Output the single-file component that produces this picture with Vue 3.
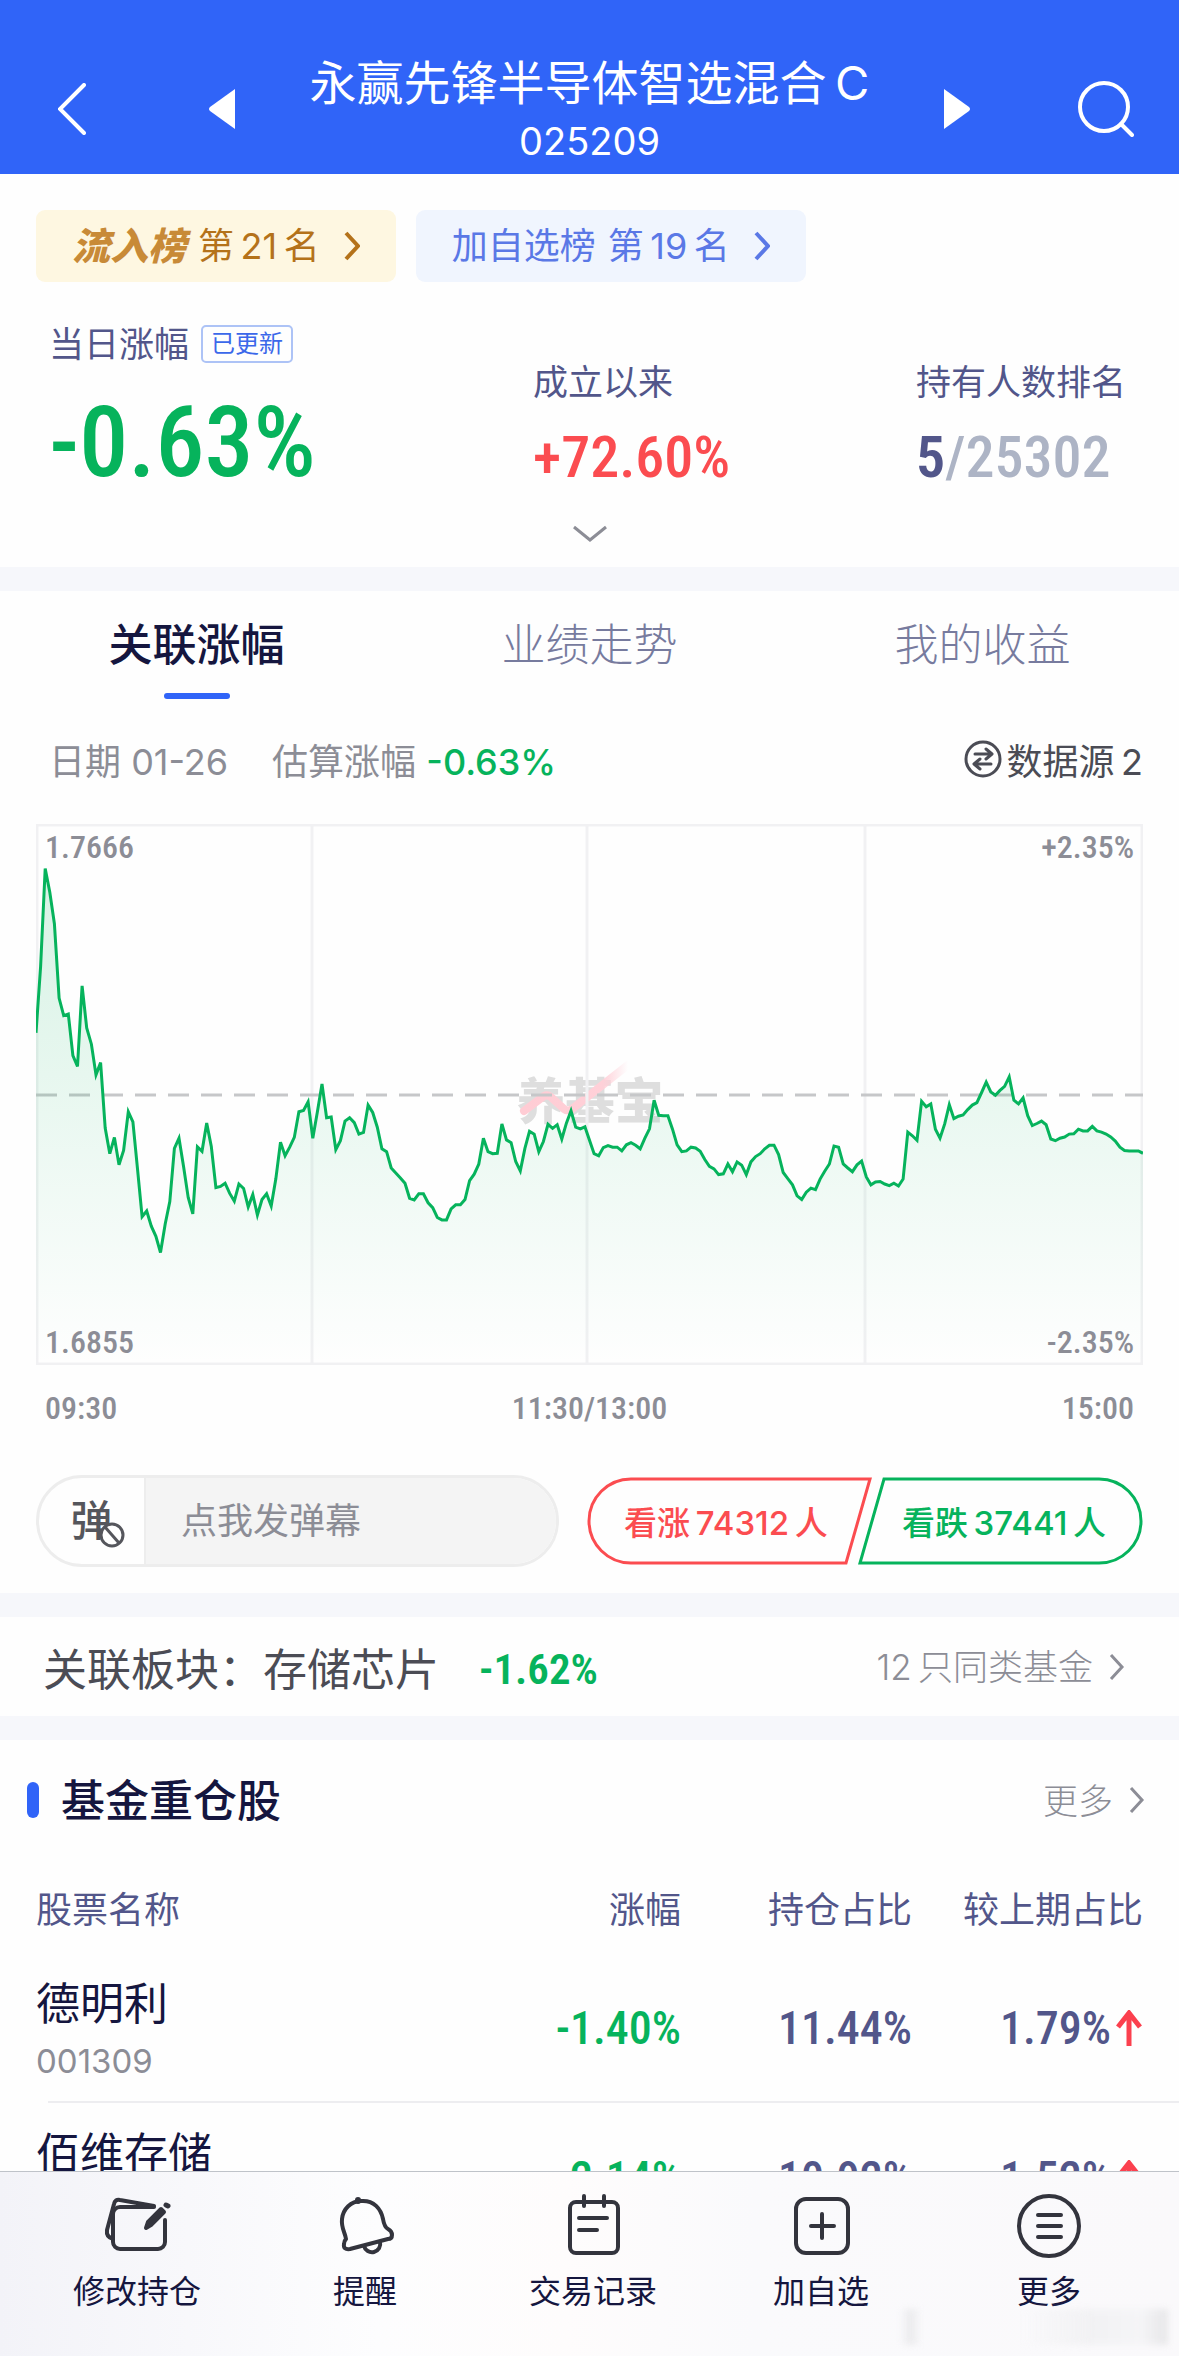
<script setup>
import { computed, ref } from "vue";

const fund = {
  name: "永赢先锋半导体智选混合\u2009C",
  code: "025209",
};

const tabs = ["关联涨幅", "业绩走势", "我的收益"];
const activeTab = ref("关联涨幅");
const message = ref("");

const stocks = [
  {
    name: "德明利",
    code: "001309",
    change: "-1.40%",
    share: "11.44%",
    diff: "1.79%",
  },
  {
    name: "佰维存储",
    code: "688525",
    change: "-2.14%",
    share: "10.92%",
    diff: "1.52%",
  },
];

const navItems = [
  { label: "修改持仓", icon: "edit" },
  { label: "提醒", icon: "bell" },
  { label: "交易记录", icon: "record" },
  { label: "加自选", icon: "add" },
  { label: "更多", icon: "more" },
];

// one tick per minute, measured down from the top of the range
const rangeTop = 61;
const rangeBottom = 1385;
const ticks = [
  572, 410, 170, 228, 305, 487, 530, 526, 628, 654, 457, 560, 600, 675, 645,
  805, 868, 828, 895, 860, 765, 790, 905, 1022, 1008, 1045, 1070, 1110, 1040,
  985, 855, 830, 900, 975, 1015, 851, 862, 793, 850, 951, 948, 940, 965, 984,
  942, 953, 998, 968, 1018, 980, 966, 996, 930, 840, 873, 852, 828, 765, 762,
  741, 830, 765, 697, 780, 778, 858, 836, 788, 780, 792, 820, 816, 749, 767,
  803, 856, 863, 903, 915, 927, 940, 977, 981, 966, 966, 988, 1000, 1024, 1030,
  1030, 1003, 993, 993, 980, 934, 918, 893, 830, 863, 868, 867, 795, 834, 841,
  887, 910, 855, 813, 820, 863, 838, 796, 806, 797, 832, 793, 763, 803, 807,
  802, 835, 868, 873, 853, 848, 852, 852, 861, 846, 841, 847, 856, 830, 807,
  737, 774, 775, 775, 808, 846, 863, 861, 852, 854, 862, 882, 899, 905, 919,
  917, 893, 912, 888, 896, 919, 888, 875, 868, 856, 847, 847, 870, 914, 929,
  944, 971, 980, 962, 952, 956, 930, 911, 893, 849, 852, 893, 903, 912, 895,
  886, 925, 944, 937, 936, 942, 946, 940, 947, 930, 815, 824, 835, 740, 753,
  746, 808, 830, 795, 748, 782, 776, 773, 760, 749, 743, 718, 693, 717, 725,
  713, 703, 680, 737, 746, 731, 775, 799, 794, 788, 797, 832, 836, 830, 827,
  820, 819, 808, 812, 812, 801, 812, 815, 820, 827, 837, 852, 860, 861, 861,
  861, 867,
];

const chartWidth = 1107;
const chartHeight = 541;

const linePoints = computed(() =>
  ticks
    .map((tick, i) => {
      const x = (i / (ticks.length - 1)) * chartWidth;
      const y = ((tick - rangeTop) / (rangeBottom - rangeTop)) * chartHeight;
      return `${x.toFixed(1)},${y.toFixed(1)}`;
    })
    .join(" ")
);

const areaPoints = computed(
  () =>
    `0,${chartHeight} ${linePoints.value} ${chartWidth},${chartHeight}`
);
</script>

<template>
  <div class="page">
    <header class="header">
      <button class="iconBtn" aria-label="返回">
        <svg width="28" height="52" viewBox="0 0 28 52">
          <path class="headStroke" d="M26 2L2 26l24 24" />
        </svg>
      </button>
      <button class="iconBtn prevBtn" aria-label="上一只">
        <svg width="26" height="40" viewBox="0 0 26 40">
          <path fill="#fff" d="M26 0v40L1 22q-2-2 0-4z" />
        </svg>
      </button>
      <div class="fundTitle">
        <h1>{{ fund.name }}</h1>
        <p>{{ fund.code }}</p>
      </div>
      <button class="iconBtn nextBtn" aria-label="下一只">
        <svg width="26" height="40" viewBox="0 0 26 40">
          <path fill="#fff" d="M0 0v40l25-18q2-2 0-4z" />
        </svg>
      </button>
      <button class="iconBtn" aria-label="搜索">
        <svg width="56" height="56" viewBox="0 0 56 56">
          <circle class="headStroke" cx="26" cy="26" r="24" />
          <path class="headStroke" d="M43 43l11 11" />
        </svg>
      </button>
    </header>

    <main class="content">
      <section class="summary">
        <div class="ranks">
          <a class="rank gold" href="#">
            <strong>流入榜</strong>
            <span>第&thinsp;21&thinsp;名</span>
            <svg width="16" height="30" viewBox="0 0 16 30">
              <path class="arrow bold" d="M2 2l12 13L2 28" />
            </svg>
          </a>
          <a class="rank blue" href="#">
            <span>加自选榜</span>
            <span>第&thinsp;19&thinsp;名</span>
            <svg width="16" height="30" viewBox="0 0 16 30">
              <path class="arrow bold" d="M2 2l12 13L2 28" />
            </svg>
          </a>
        </div>
        <div class="stats">
          <article class="today">
            <p class="label">当日涨幅 <span class="badge">已更新</span></p>
            <p class="big num down">-0.63%</p>
          </article>
          <article class="stat">
            <p class="label">成立以来</p>
            <p class="mid num up">+72.60%</p>
          </article>
          <article class="stat">
            <p class="label">持有人数排名</p>
            <p class="mid num total"><b>5</b>/25302</p>
          </article>
        </div>
        <button class="expand" aria-label="展开">
          <svg width="36" height="18" viewBox="0 0 36 18">
            <path class="arrow" d="M2 2l16 13L34 2" />
          </svg>
        </button>
      </section>

      <section class="trend">
        <nav class="tabs">
          <button
            v-for="tab in tabs"
            :key="tab"
            class="tab"
            :class="{ active: tab === activeTab }"
            @click="activeTab = tab"
          >
            {{ tab }}
          </button>
        </nav>
        <div class="info">
          <span>日期 01-26</span>
          <span class="estimate">估算涨幅 <b class="down">-0.63%</b></span>
          <button class="source">
            <svg width="38" height="38" viewBox="0 0 38 38">
              <circle cx="19" cy="19" r="17" />
              <path d="M11 14h16M22 9l6 5-6 5M27 24H11M16 19l-6 5 6 5" />
            </svg>
            <span>数据源&thinsp;2</span>
          </button>
        </div>

        <div class="chart">
          <div class="watermark">
            <svg width="152" height="76" viewBox="0 0 152 76">
              <defs>
                <linearGradient id="slash" x1="0" x2="1" y1="0" y2="0">
                  <stop offset="0" stop-color="#ffccd4" />
                  <stop offset="0.75" stop-color="#ffd0d8" />
                  <stop offset="1" stop-color="#ffd0d8" stop-opacity="0" />
                </linearGradient>
              </defs>
              <text x="76" y="62" text-anchor="middle">养基宝</text>
              <path
                d="M10 54l20-15q4-2 8 2l12 11q4 3 8 0L114 8"
                fill="none"
                stroke="url(#slash)"
                stroke-width="8"
                stroke-linecap="round"
              />
            </svg>
          </div>
          <svg
            class="plot"
            :viewBox="`0 0 ${chartWidth} ${chartHeight}`"
            preserveAspectRatio="none"
          >
            <defs>
              <linearGradient
                id="fade"
                gradientUnits="userSpaceOnUse"
                x1="0"
                y1="40"
                x2="0"
                :y2="chartHeight"
              >
                <stop offset="0" stop-color="#06b35c" stop-opacity="0.16" />
                <stop offset="1" stop-color="#06b35c" stop-opacity="0" />
              </linearGradient>
            </defs>
            <path
              class="grid"
              d="M1 1H1106V540H1ZM276 0V541M551 0V541M829 0V541"
            />
            <path class="zero" d="M0 271H1107" />
            <polygon :points="areaPoints" fill="url(#fade)" />
            <polyline class="line" :points="linePoints" />
          </svg>
          <div class="scale num">
            <span>1.7666</span><span>+2.35%</span>
          </div>
          <div class="scale num">
            <span>1.6855</span><span>-2.35%</span>
          </div>
        </div>
        <div class="times num">
          <span>09:30</span><span>11:30/13:00</span><span>15:00</span>
        </div>

        <div class="actions">
          <div class="danmu">
            <button class="danmuToggle" aria-label="弹幕开关">
              <span>弹</span>
              <svg width="26" height="26" viewBox="0 0 26 26">
                <circle cx="13" cy="13" r="11" />
                <path d="M6 5l14 16" />
              </svg>
            </button>
            <input
              v-model="message"
              aria-label="发弹幕"
              placeholder="点我发弹幕"
            />
          </div>
          <div class="votes">
            <button class="vote up">
              <svg viewBox="0 0 286 88" preserveAspectRatio="none">
                <path d="M44 2H283L259 86H44A42 42 0 0 1 44 2Z" />
              </svg>
              <span>看涨&thinsp;74312&thinsp;人</span>
            </button>
            <button class="vote down">
              <svg viewBox="0 0 286 88" preserveAspectRatio="none">
                <path d="M27 2H242A42 42 0 0 1 242 86H3Z" />
              </svg>
              <span>看跌&thinsp;37441&thinsp;人</span>
            </button>
          </div>
        </div>
      </section>

      <section class="related">
        <h2>关联板块：存储芯片</h2>
        <span class="num small down">-1.62%</span>
        <a class="moreLink" href="#">
          <span>12&thinsp;只同类基金</span>
          <svg width="16" height="30" viewBox="0 0 16 30">
            <path class="arrow" d="M2 3l11 12L2 27" />
          </svg>
        </a>
      </section>

      <section class="holdings">
        <div class="heading">
          <h2>基金重仓股</h2>
          <a class="moreLink" href="#">
            <span>更多</span>
            <svg width="16" height="30" viewBox="0 0 16 30">
              <path class="arrow" d="M2 3l11 12L2 27" />
            </svg>
          </a>
        </div>
        <table>
          <thead>
            <tr>
              <th>股票名称</th>
              <th>涨幅</th>
              <th>持仓占比</th>
              <th>较上期占比</th>
            </tr>
          </thead>
          <tbody>
            <tr v-for="stock in stocks" :key="stock.code">
              <td>
                <p class="stockName">{{ stock.name }}</p>
                <p class="stockCode">{{ stock.code }}</p>
              </td>
              <td class="num down">{{ stock.change }}</td>
              <td class="num">{{ stock.share }}</td>
              <td class="num">
                {{ stock.diff
                }}<svg width="28" height="38" viewBox="0 0 28 38">
                  <path d="M14 36V3M3 17L14 3l11 14" />
                </svg>
              </td>
            </tr>
          </tbody>
        </table>
      </section>
    </main>

    <nav class="bottomNav">
      <button v-for="item in navItems" :key="item.icon" class="navItem">
        <svg width="68" height="68" viewBox="0 0 68 68">
          <template v-if="item.icon === 'edit'">
            <path
              d="M51 15H17a7 7 0 0 0-7 7v28a7 7 0 0 0 7 7h38a7 7 0 0 0 7-7V28"
            />
            <path d="M51 14L17 8q-5-1-6 4L4 38q-1 7 6 9" />
            <path class="solid" d="M58 17l3 3-13 13-5 3 2-6z" />
            <path d="M63 13l2 1" stroke-width="5" />
          </template>
          <template v-else-if="item.icon === 'bell'">
            <path
              d="M15 47C14 40 10 36 11 27C12 17 20 9 30 9C43 8 50 17 52 27C53 33 55 36 57 37Q61 39 61 43Q61 47 57 47L19 57Q12 58 13 52Q13 49 15 47Z"
            />
            <path d="M33 54a8 8 0 0 0 16-4" />
            <path d="M27 8v1" stroke-width="6" />
          </template>
          <template v-else-if="item.icon === 'record'">
            <rect x="11" y="10" width="48" height="51" rx="6" />
            <path d="M25 4v10M45 4v10M20 26h28M20 38h18" />
          </template>
          <template v-else-if="item.icon === 'add'">
            <rect x="9" y="7" width="52" height="54" rx="10" />
            <path d="M24 34h23M35 22v24" />
          </template>
          <template v-else>
            <circle cx="34" cy="34" r="30" />
            <path d="M23 23h23M23 34h23M23 45h23" />
          </template>
        </svg>
        <span>{{ item.label }}</span>
      </button>
      <i class="smudge"></i>
    </nav>
  </div>
</template>

<style>
body {
  margin: 0;
}
</style>

<style scoped>
.page {
  height: 100vh;
  display: flex;
  flex-direction: column;
  background-color: #fefefe;
  color: #15163f;
  font-family: Inter, "Noto Sans CJK SC", sans-serif;
  font-size: 36px;
}

h1,
h2,
p {
  margin: 0;
  font-weight: 400;
}

button,
input {
  margin: 0;
  padding: 0;
  border: 0;
  background: none;
  color: inherit;
  font: inherit;
}

a {
  color: inherit;
  text-decoration: none;
}

svg {
  display: block;
  flex-shrink: 0;
}

.num {
  font-family: "Roboto Condensed", Roboto, sans-serif;
  font-weight: 600;
}

.up {
  color: #fb4c50;
}

.down {
  color: #06b35c;
}

.arrow {
  fill: none;
  stroke: currentColor;
  stroke-width: 3;
}

.arrow.bold {
  stroke-width: 4;
}

.header {
  display: flex;
  align-items: center;
  box-sizing: border-box;
  height: 174px;
  flex-shrink: 0;
  padding: 44px 45px 0 58px;
  background-color: #3064f8;
  color: #fff;
}

.headStroke {
  fill: none;
  stroke: #fff;
  stroke-width: 4;
  stroke-linecap: round;
}

.prevBtn {
  margin-left: 123px;
}

.nextBtn {
  margin-right: 108px;
}

.fundTitle {
  flex: 1;
  padding-top: 4px;
  text-align: center;
}

.fundTitle h1 {
  font-size: 47px;
  line-height: 60px;
}

.fundTitle p {
  font-size: 38px;
  line-height: 56px;
}

.content {
  flex: 1;
  min-height: 0;
  overflow-y: auto;
  scrollbar-width: none;
}

.summary {
  padding: 36px 36px 0;
  height: 357px;
  border-bottom: 24px solid #f6f7fb;
}

.ranks {
  display: flex;
  gap: 20px;
}

.rank {
  display: flex;
  align-items: center;
  gap: 12px;
  height: 72px;
  padding: 0 36px;
  border-radius: 9px;
  line-height: 44px;
  white-space: nowrap;
}

.rank svg {
  margin-left: 12px;
}

.gold {
  background-color: #fef7e1;
  color: #b4721a;
}

.gold strong {
  color: #c88a37;
  font-size: 38px;
  font-style: italic;
  font-weight: 900;
}

.blue {
  background-color: #f0f5fe;
  color: #5a78e6;
}

.stats {
  display: grid;
  grid-template-columns: 484px 383px 1fr;
  padding: 36px 0 0 13px;
}

.label {
  display: flex;
  align-items: center;
  gap: 12px;
  color: #52568a;
  font-size: 35px;
  line-height: 52px;
  white-space: nowrap;
}

.badge {
  padding: 0 8px;
  border: 2px solid #adc3f6;
  border-radius: 5px;
  color: #3b68ea;
  font-size: 24px;
  line-height: 34px;
}

.big {
  font-size: 98px;
  font-weight: 500;
  line-height: 146px;
}

.stat {
  padding-top: 38px;
}

.mid {
  font-size: 58px;
  font-weight: 500;
  line-height: 98px;
}

.total {
  color: #adb4c5;
}

.total b {
  color: #52568a;
  font-weight: 600;
}

.expand {
  display: block;
  margin: 9px auto 0;
  color: #8c8d96;
}

.trend {
  padding: 0 36px 26px;
  border-bottom: 24px solid #f6f7fb;
}

.tabs {
  display: grid;
  grid-template-columns: repeat(3, 1fr);
  margin: 0 -36px;
}

.tab {
  display: flex;
  flex-direction: column;
  align-items: center;
  height: 108px;
  color: #777b9e;
  font-size: 44px;
  font-weight: 300;
  line-height: 108px;
}

.tab.active {
  color: #15163f;
  font-weight: 500;
}

.tab.active::after {
  content: "";
  width: 66px;
  height: 6px;
  margin-top: -6px;
  border-radius: 3px;
  background-color: #3064f8;
}

.info {
  display: flex;
  align-items: center;
  height: 52px;
  padding: 34px 0 39px 13px;
  color: #8c8d96;
}

.estimate {
  margin-left: 44px;
}

.estimate b {
  font-weight: 500;
}

.source {
  display: flex;
  align-items: center;
  gap: 5px;
  margin-left: auto;
  color: #4b4c55;
}

.source svg {
  fill: none;
  stroke: #4b4c55;
  stroke-width: 3;
  stroke-linecap: round;
  stroke-linejoin: round;
}

.chart {
  position: relative;
  display: flex;
  flex-direction: column;
  justify-content: space-between;
  box-sizing: border-box;
  height: 541px;
}

.plot,
.watermark {
  position: absolute;
  inset: 0;
  width: 100%;
  height: 100%;
}

.watermark {
  display: flex;
  align-items: center;
  justify-content: center;
}

.watermark text {
  fill: #dedede;
  font-size: 49px;
  font-weight: 900;
}

.grid {
  fill: none;
  stroke: #f1f1f3;
  stroke-width: 3;
}

.zero {
  stroke: #c6c7c9;
  stroke-width: 3;
  stroke-dasharray: 21 12;
}

.line {
  fill: none;
  stroke: #06b35c;
  stroke-width: 3;
}

.scale,
.times {
  position: relative;
  display: flex;
  justify-content: space-between;
  padding: 0 9px;
  color: #8c8d96;
  font-size: 32px;
  font-weight: 500;
  line-height: 46px;
}

.times {
  padding-top: 20px;
}

.actions {
  display: grid;
  grid-template-columns: 523fr 556fr;
  align-items: center;
  gap: 28px;
  margin-top: 44px;
}

.danmu {
  display: flex;
  box-sizing: border-box;
  height: 92px;
  border: 3px solid #ededed;
  border-radius: 46px;
  overflow: hidden;
}

.danmuToggle {
  display: flex;
  align-items: center;
  justify-content: center;
  box-sizing: border-box;
  width: 107px;
  padding-left: 12px;
  border-right: 2px solid #ededed;
  color: #55565c;
  font-size: 42px;
  font-weight: 500;
  line-height: 60px;
}

.danmuToggle svg {
  margin: 28px 0 0 -14px;
  fill: #fff;
  stroke: #55565c;
  stroke-width: 3;
}

.danmu input {
  flex: 1;
  min-width: 0;
  padding-left: 35px;
  background-color: #f4f4f4;
}

.danmu input::placeholder {
  color: #8c8d96;
  opacity: 1;
}

.votes {
  display: grid;
  grid-template-columns: 1fr 1fr;
}

.vote {
  position: relative;
  height: 88px;
  font-size: 33px;
  font-weight: 500;
  white-space: nowrap;
}

.vote svg {
  position: absolute;
  top: 0;
  left: 0;
  width: 286px;
  height: 88px;
  fill: none;
  stroke: currentColor;
  stroke-width: 3;
}

.vote.down svg {
  left: auto;
  right: 0;
}

.related {
  display: flex;
  align-items: center;
  height: 99px;
  padding: 0 54px 0 43px;
  border-bottom: 24px solid #f6f7fb;
  color: #4b4c55;
}

.related h2,
.heading h2 {
  font-size: 44px;
}

.small {
  padding-top: 4px;
  margin-left: 40px;
  font-size: 43px;
}

.moreLink {
  display: flex;
  align-items: center;
  gap: 16px;
  margin-left: auto;
  color: #8c8d96;
  font-size: 35px;
  font-weight: 300;
}

.heading {
  display: flex;
  align-items: center;
  height: 60px;
  padding: 30px 34px 0 27px;
}

.heading h2,
.moreLink span {
  padding-bottom: 4px;
}

.heading h2 {
  font-weight: 500;
}

.heading::before {
  content: "";
  width: 12px;
  height: 36px;
  margin-right: 22px;
  border-radius: 6px;
  background-color: #3064f8;
}

table {
  width: 100%;
  padding-left: 36px;
  border-spacing: 0;
  table-layout: fixed;
}

th {
  width: 231px;
  padding: 60px 0 23px;
  color: #52568a;
  font-weight: 400;
  line-height: 40px;
  text-align: right;
  white-space: nowrap;
}

th:first-child {
  width: auto;
  text-align: left;
}

th:last-child {
  width: 231px;
  padding-right: 36px;
}

td {
  box-sizing: border-box;
  height: 150px;
  padding: 2px 0 0;
  border-bottom: 2px solid #ededf0;
  color: #52568a;
  font-size: 46px;
  text-align: right;
  white-space: nowrap;
}

td:first-child {
  position: relative;
  border-bottom-color: transparent;
  text-align: left;
}

td:first-child::after {
  content: "";
  position: absolute;
  left: 12px;
  right: 0;
  bottom: -2px;
  height: 2px;
  background-color: #ededf0;
}

td.num {
  font-weight: 500;
}

td.down {
  color: #06b35c;
}

td:last-child {
  padding-right: 36px;
}

td svg {
  display: inline-block;
  margin-left: 4px;
  vertical-align: -4px;
  fill: none;
  stroke: #fb404e;
  stroke-width: 5;
}

.stockName {
  padding-top: 6px;
  color: #15163f;
  font-size: 44px;
  line-height: 60px;
}

.stockCode {
  color: #8c8d96;
  font-size: 33px;
  line-height: 54px;
}

.bottomNav {
  position: relative;
  display: grid;
  grid-template-columns: repeat(5, 1fr);
  align-items: start;
  box-sizing: border-box;
  height: 185px;
  flex-shrink: 0;
  padding: 20px 16px 0 23px;
  border-top: 1px solid #bfc3c9;
  background: linear-gradient(
    90deg,
    #f3f3f8 0%,
    #fdfdfe 32%,
    #fefcfc 48%,
    #fafafc 64%,
    #faf9fb 100%
  );
}

.navItem {
  display: flex;
  flex-direction: column;
  align-items: center;
  gap: 8px;
  font-size: 32px;
  line-height: 48px;
}

.navItem svg {
  fill: none;
  stroke: #33343d;
  stroke-width: 4;
  stroke-linecap: round;
  stroke-linejoin: round;
}

.navItem .solid {
  fill: #33343d;
}

.smudge {
  position: absolute;
  right: 11px;
  bottom: 11px;
  width: 268px;
  height: 36px;
  background: linear-gradient(
    90deg,
    transparent,
    #e6e6e8 4%,
    transparent 8%,
    transparent 45%,
    #f0f0f2 70%,
    #f4f4f6 90%,
    #e2e2e4
  );
  filter: blur(3px);
  opacity: 0.8;
}
</style>
